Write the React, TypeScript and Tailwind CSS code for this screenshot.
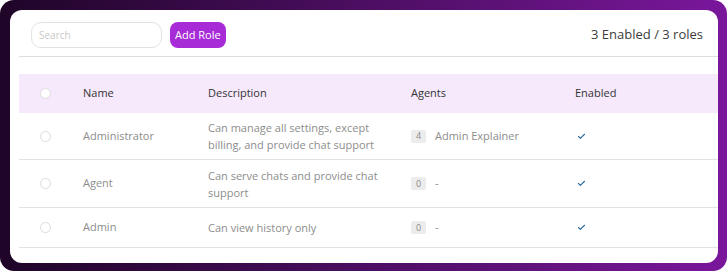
import { Check } from "lucide-react";

type Role = {
  name: string;
  description: string;
  agents: number;
  agentNames: string;
};

const roles: Role[] = [
  {
    name: "Administrator",
    description: "Can manage all settings, except billing, and provide chat support",
    agents: 4,
    agentNames: "Admin Explainer",
  },
  {
    name: "Agent",
    description: "Can serve chats and provide chat support",
    agents: 0,
    agentNames: "-",
  },
  {
    name: "Admin",
    description: "Can view history only",
    agents: 0,
    agentNames: "-",
  },
];

const cols = "grid grid-cols-[64px_125px_203px_164px_1fr] items-center";
const rowHeights = ["h-[47px]", "h-[48px]", "h-[40px]"];

function Radio() {
  return <div className="ml-[21px] h-[11px] w-[11px] rounded-full border border-[#dcdcdc] bg-white" />;
}

export default function App() {
  return (
    <div
      className="h-[271px] w-[727px] rounded-[14px] bg-gradient-to-r from-[#1f0528] via-[#4c0e62] to-[#7a179c] pb-[8px] pl-[10px] pr-[9px] pt-[10px]"
      style={{ fontFamily: '"Open Sans", "Liberation Sans", sans-serif' }}
    >
      <div className="flex h-full flex-col rounded-[12px] bg-white pl-[9px]">
        <div className="flex h-[47px] items-end border-b-[1.5px] border-[#dedede] pb-[8px] pl-[12px] pr-[15px]">
          <div className="flex w-full items-center">
            <div className="flex h-[26px] w-[131px] items-center rounded-[10px] border-[1.5px] border-[#e2e2e2] pl-[7px] text-[10px] text-[#c9c9c9]">
              Search
            </div>
            <button className="ml-[8px] h-[26px] rounded-[8px] bg-[#a72bd6] px-[5px] text-[11px] text-white">
              Add Role
            </button>
            <div className="ml-auto text-[13px] text-[#3d3d3d]">3 Enabled / 3 roles</div>
          </div>
        </div>

        <div className={`${cols} mt-[17px] h-[39px] bg-[#f6e9fb] text-[11px] text-[#333]`}>
          <Radio />
          <div>Name</div>
          <div>Description</div>
          <div>Agents</div>
          <div>Enabled</div>
        </div>

        {roles.map((r, i) => (
          <div
            key={r.name}
            className={`${cols} ${rowHeights[i]} border-b-[1.5px] border-[#e2e2e2] text-[11px] text-[#8d8d8d]`}
          >
            <Radio />
            <div>{r.name}</div>
            <div className="w-[172px] leading-[17px]">{r.description}</div>
            <div className="flex items-center">
              <span className="flex h-[13px] w-[15px] items-center justify-center rounded-[2px] bg-[#ececec] text-[9px] text-[#8a8a8a]">
                {r.agents}
              </span>
              <span className="ml-[9px]">{r.agentNames}</span>
            </div>
            <div className="pl-[2px]">
              <Check className="h-[9px] w-[9px] text-[#2f6d9e]" strokeWidth={3} />
            </div>
          </div>
        ))}
      </div>
    </div>
  );
}
